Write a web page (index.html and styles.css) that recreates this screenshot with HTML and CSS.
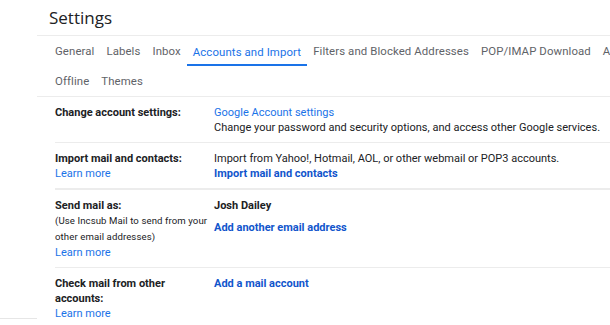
FILE: index.html
```html
<!DOCTYPE html>
<html>
<head>
<meta charset="utf-8">
<link rel="stylesheet" href="styles.css">
</head>
<body>
<div class="app">
  <aside class="sidebar"><div class="sidebar-foot"></div></aside>
  <main class="main">
    <header class="header"><h1 class="title">Settings</h1></header>
    <nav class="tabs">
      <div class="tab-row">
        <span class="tab">General</span>
        <span class="tab">Labels</span>
        <span class="tab">Inbox</span>
        <span class="tab active">Accounts and Import</span>
        <span class="tab">Filters and Blocked Addresses</span>
        <span class="tab">POP/IMAP Download</span>
        <span class="tab">Add-ons</span>
      </div>
      <div class="tab-row">
        <span class="tab">Offline</span>
        <span class="tab">Themes</span>
      </div>
    </nav>
    <section class="rows">
      <div class="row">
        <div class="label"><b>Change account settings:</b></div>
        <div class="value">
          <a class="link">Google Account settings</a>
          <div>Change your password and security options, and access other Google services.</div>
        </div>
      </div>
      <div class="row thick">
        <div class="label"><b>Import mail and contacts:</b><a class="link">Learn more</a></div>
        <div class="value">
          <div>Import from Yahoo!, Hotmail, AOL, or other webmail or POP3 accounts.</div>
          <a class="link strong">Import mail and contacts</a>
        </div>
      </div>
      <div class="row">
        <div class="label">
          <b>Send mail as:</b>
          <span class="note">(Use Incsub Mail to send from your<br>other email addresses)</span>
          <a class="link">Learn more</a>
        </div>
        <div class="value">
          <b>Josh Dailey</b>
          <a class="link strong spaced">Add another email address</a>
        </div>
      </div>
      <div class="row last">
        <div class="label"><b>Check mail from other<br>accounts:</b><a class="link">Learn more</a></div>
        <div class="value"><a class="link strong">Add a mail account</a></div>
      </div>
    </section>
  </main>
</div>
</body>
</html>
```
FILE: styles.css
```css
html, body {
  margin: 0;
  padding: 0;
  background: #fff;
}
body {
  font-family: Roboto, "Liberation Sans", Arial, sans-serif;
  color: #202124;
  width: 610px;
  height: 325px;
  overflow: hidden;
}
.app {
  display: flex;
  height: 325px;
}
.sidebar {
  width: 37px;
  flex: none;
  display: flex;
  flex-direction: column;
  justify-content: flex-end;
}
.sidebar-foot {
  height: 6px;
  border-top: 1px solid #e6e6e6;
}
.main {
  flex: 1;
  min-width: 0;
  overflow: hidden;
}
.header {
  height: 35px;
  border-bottom: 1px solid #ececec;
  padding-left: 12px;
  display: flex;
  align-items: center;
}
.title {
  margin: 0;
  font-family: "Open Sans", Roboto, sans-serif;
  font-weight: 400;
  font-size: 17px;
  color: #202124;
  line-height: 20px;
}
.tabs {
  padding-left: 12px;
  border-bottom: 1px solid #ececec;
}
.tab-row {
  display: flex;
  white-space: nowrap;
  height: 30px;
}
.tab {
  font-family: Roboto, "Open Sans", sans-serif;
  font-size: 11.4px;
  color: #5f6368;
  padding: 1px 6px 0;
  height: 30px;
  line-height: 29px;
  box-sizing: border-box;
  letter-spacing: 0.1px;
}
.tab.active {
  color: #1a73e8;
  border-bottom: 2px solid #1a73e8;
  line-height: 28px;
  padding-top: 2px;
}
.rows {
  margin-left: 18px;
}
.row {
  display: grid;
  grid-template-columns: 159px 1fr;
  padding: 8px 0 7px;
  border-bottom: 1px solid #ececec;
  font-size: 11px;
  line-height: 15px;
}
.row.thick {
  border-bottom-width: 2px;
}
.row.last {
  border-bottom: none;
}
.label, .value {
  display: flex;
  flex-direction: column;
  align-items: flex-start;
}
.label b, .value b {
  font-weight: 700;
  color: #202124;
}
.note {
  font-size: 9.6px;
  line-height: 16px;
  color: #202124;
  letter-spacing: 0.1px;
  white-space: nowrap;
}
.link {
  color: #1a73e8;
  text-decoration: none;
}
.link.strong {
  color: #1155cc;
  font-weight: 700;
}
.link.spaced {
  margin-top: 7px;
}
```
